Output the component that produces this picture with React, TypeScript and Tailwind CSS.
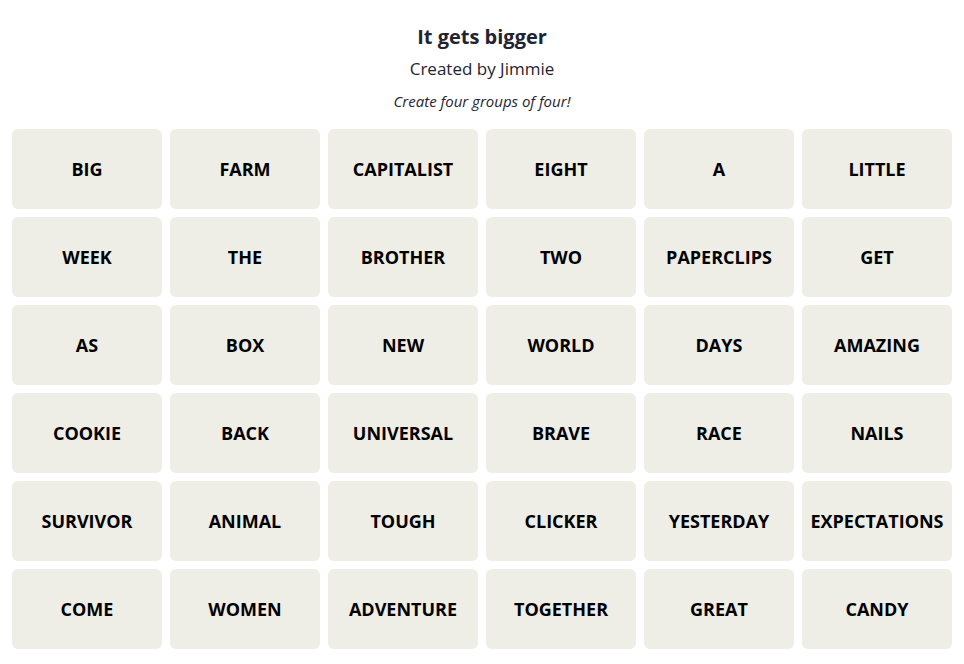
import React from 'react';

const words = [
  'BIG', 'FARM', 'CAPITALIST', 'EIGHT', 'A', 'LITTLE',
  'WEEK', 'THE', 'BROTHER', 'TWO', 'PAPERCLIPS', 'GET',
  'AS', 'BOX', 'NEW', 'WORLD', 'DAYS', 'AMAZING',
  'COOKIE', 'BACK', 'UNIVERSAL', 'BRAVE', 'RACE', 'NAILS',
  'SURVIVOR', 'ANIMAL', 'TOUGH', 'CLICKER', 'YESTERDAY', 'EXPECTATIONS',
  'COME', 'WOMEN', 'ADVENTURE', 'TOGETHER', 'GREAT', 'CANDY',
];

const App = () => {
  return (
    <div className="min-h-screen bg-white font-['Open_Sans',sans-serif] px-3 pt-[23px] pb-4">
      <div className="flex flex-col items-center text-[#1f2430]">
        <h1 className="text-[20px] leading-[28px] font-bold">It gets bigger</h1>
        <p className="text-[17px] leading-[24px] mt-[6px]">Created by Jimmie</p>
        <p className="text-[15px] leading-[22px] italic mt-[9px]">Create four groups of four!</p>
      </div>

      <div className="grid grid-cols-6 gap-2 mt-[17px]">
        {words.map((word) => (
          <button
            key={word}
            className="h-[80px] rounded-md bg-[#efeee6] flex items-center justify-center text-[18px] font-bold text-black"
          >
            {word}
          </button>
        ))}
      </div>
    </div>
  );
};

export default App;
